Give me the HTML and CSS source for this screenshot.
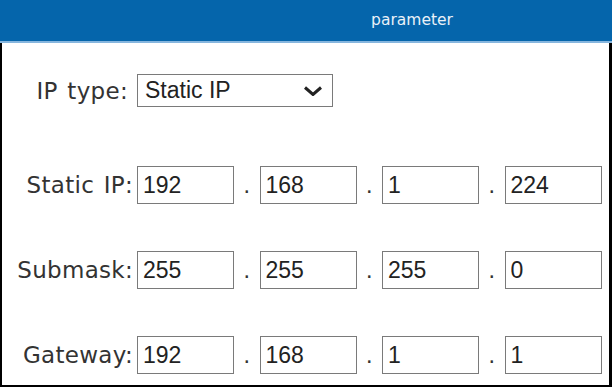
FILE: index.html
```html
<!DOCTYPE html>
<html lang="en">
<head>
  <meta charset="UTF-8" />
  <meta name="viewport" content="width=device-width, initial-scale=1.0"/>
  <title>parameter</title>
  <link rel="stylesheet" href="styles.css">
</head>
<body>
  <div id="header">
    <div class="headCell"></div>
    <div class="headCell title">parameter</div>
  </div>
  <div id="panel">
    <div class="row typeRow">
      <label class="label">IP type:</label>
      <div class="selectBox">
        <span>Static IP</span>
        <svg width="20" height="10" viewBox="0 0 20 10">
          <path d="M2 1.5 L10 8.5 L18 1.5" fill="none" stroke="#222" stroke-width="3"/>
        </svg>
      </div>
    </div>
    <div class="row">
      <label class="label">Static IP:</label>
      <div class="ipGroup">
        <input class="octet" type="text" value="192">
        <span class="dot">.</span>
        <input class="octet" type="text" value="168">
        <span class="dot">.</span>
        <input class="octet" type="text" value="1">
        <span class="dot">.</span>
        <input class="octet" type="text" value="224">
      </div>
    </div>
    <div class="row">
      <label class="label">Submask:</label>
      <div class="ipGroup">
        <input class="octet" type="text" value="255">
        <span class="dot">.</span>
        <input class="octet" type="text" value="255">
        <span class="dot">.</span>
        <input class="octet" type="text" value="255">
        <span class="dot">.</span>
        <input class="octet" type="text" value="0">
      </div>
    </div>
    <div class="row">
      <label class="label">Gateway:</label>
      <div class="ipGroup">
        <input class="octet" type="text" value="192">
        <span class="dot">.</span>
        <input class="octet" type="text" value="168">
        <span class="dot">.</span>
        <input class="octet" type="text" value="1">
        <span class="dot">.</span>
        <input class="octet" type="text" value="1">
      </div>
    </div>
  </div>
</body>
</html>
```

FILE: styles.css
```css
body {
  margin: 0;
  width: 612px;
  height: 389px;
  background-color: white;
  font-family: "DejaVu Sans", Verdana, sans-serif;
  overflow: hidden;
}

#header {
  display: flex;
  height: 41px;
  background-color: #0565ab;
  border-bottom: 2px solid #86b6de;
}
.headCell {
  width: 212px;
}
.headCell.title {
  flex: 1;
  display: flex;
  align-items: center;
  justify-content: center;
  padding-bottom: 2px;
  color: #eaf1f8;
  font-size: 15.5px;
}

#panel {
  height: 344px;
  box-sizing: border-box;
  border-style: solid;
  border-color: black;
  border-width: 0 3px 2px 2px;
  padding-top: 31px;
  display: flex;
  flex-direction: column;
  gap: 47px;
}

.row {
  display: flex;
  align-items: center;
}
.typeRow {
  margin-bottom: 12px;
}

.label {
  width: 135px;
  box-sizing: border-box;
  padding-right: 4px;
  text-align: right;
  font-size: 23px;
  letter-spacing: 0.3px;
  word-spacing: 2px;
  color: #333;
}
.typeRow .label {
  padding-right: 9px;
}

.selectBox {
  width: 196px;
  height: 33px;
  box-sizing: border-box;
  border: 1px solid #7a7a7a;
  padding: 0 9px 0 7px;
  display: flex;
  align-items: center;
  justify-content: space-between;
  font-family: "Liberation Sans", Arial, sans-serif;
  font-size: 23px;
  color: #222;
}

.ipGroup {
  display: flex;
  align-items: baseline;
}
.octet {
  width: 97px;
  height: 38px;
  box-sizing: border-box;
  margin: 0;
  border: 1px solid #7a7a7a;
  border-radius: 0;
  padding: 0 5px;
  font-family: "Liberation Sans", Arial, sans-serif;
  font-size: 23px;
  color: #222;
  outline: none;
}
.dot {
  width: 25.5px;
  text-align: center;
  font-size: 22px;
  color: #333;
}
```
